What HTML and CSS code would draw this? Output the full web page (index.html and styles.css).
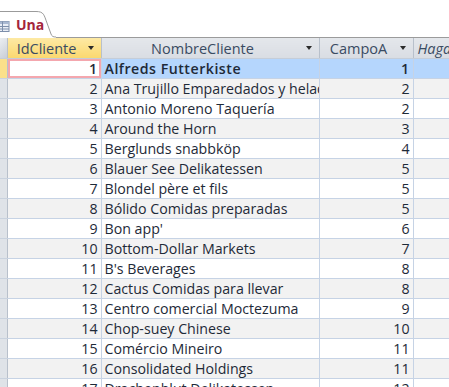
FILE: index.html
```html
<!DOCTYPE html>
<html lang="es">
<head>
    <meta charset="UTF-8">
    <title>Una</title>
    <link rel="stylesheet" href="styles.css">
</head>
<body>
    <div class="tab-strip">
        <div class="tab">
            <svg class="tab-shape" width="56" height="27" viewBox="0 0 56 27">
                <path d="M0 0.5 H36 C44 0.5 44 4 47 12 L51 23 C52 25.5 53 26 56 26" fill="#fff" stroke="#9b9b9b" stroke-width="1"/>
            </svg>
            <svg class="tab-icon" width="10" height="11" viewBox="0 0 10 11">
                <rect x="-4" y="0.5" width="13" height="10" fill="#e9eef6" stroke="#7d8fab"/>
                <rect x="-4" y="0.5" width="13" height="2.5" fill="#a9b9d2"/>
                <path d="M-4 5.5 H9 M-4 8 H9 M2.5 0.5 V10.5" stroke="#7d8fab" stroke-width="1"/>
            </svg>
            <span class="tab-title">Una</span>
        </div>
        <div class="tab-fill"></div>
    </div>

    <table class="sheet">
        <colgroup>
            <col class="c-sel">
            <col class="c-id">
            <col class="c-name">
            <col class="c-campo">
            <col class="c-new">
        </colgroup>
        <thead>
            <tr>
                <th class="sel corner"></th>
                <th class="active"><span class="hd">IdCliente</span><span class="arrow"></span></th>
                <th><span class="hd">NombreCliente</span><span class="arrow"></span></th>
                <th><span class="hd">CampoA</span><span class="arrow"></span></th>
                <th class="add">Haga clic para agregar</th>
            </tr>
        </thead>
        <tbody>
            <tr class="current">
                <td class="sel"></td><td class="num focus">1</td><td>Alfreds Futterkiste</td><td class="num">1</td><td></td>
            </tr>
            <tr><td class="sel"></td><td class="num">2</td><td>Ana Trujillo Emparedados y helados</td><td class="num">2</td><td></td></tr>
            <tr><td class="sel"></td><td class="num">3</td><td>Antonio Moreno Taquería</td><td class="num">2</td><td></td></tr>
            <tr><td class="sel"></td><td class="num">4</td><td>Around the Horn</td><td class="num">3</td><td></td></tr>
            <tr><td class="sel"></td><td class="num">5</td><td>Berglunds snabbköp</td><td class="num">4</td><td></td></tr>
            <tr><td class="sel"></td><td class="num">6</td><td>Blauer See Delikatessen</td><td class="num">5</td><td></td></tr>
            <tr><td class="sel"></td><td class="num">7</td><td>Blondel père et fils</td><td class="num">5</td><td></td></tr>
            <tr><td class="sel"></td><td class="num">8</td><td>Bólido Comidas preparadas</td><td class="num">5</td><td></td></tr>
            <tr><td class="sel"></td><td class="num">9</td><td>Bon app'</td><td class="num">6</td><td></td></tr>
            <tr><td class="sel"></td><td class="num">10</td><td>Bottom-Dollar Markets</td><td class="num">7</td><td></td></tr>
            <tr><td class="sel"></td><td class="num">11</td><td>B's Beverages</td><td class="num">8</td><td></td></tr>
            <tr><td class="sel"></td><td class="num">12</td><td>Cactus Comidas para llevar</td><td class="num">8</td><td></td></tr>
            <tr><td class="sel"></td><td class="num">13</td><td>Centro comercial Moctezuma</td><td class="num">9</td><td></td></tr>
            <tr><td class="sel"></td><td class="num">14</td><td>Chop-suey Chinese</td><td class="num">10</td><td></td></tr>
            <tr><td class="sel"></td><td class="num">15</td><td>Comércio Mineiro</td><td class="num">11</td><td></td></tr>
            <tr><td class="sel"></td><td class="num">16</td><td>Consolidated Holdings</td><td class="num">11</td><td></td></tr>
            <tr><td class="sel"></td><td class="num">17</td><td>Drachenblut Delikatessen</td><td class="num">12</td><td></td></tr>
        </tbody>
    </table>
</body>
</html>
```

FILE: styles.css
```css
body {
    margin: 0;
    background: #fff;
    font-family: "Open Sans", "Liberation Sans", sans-serif;
    font-size: 14.2px;
    color: #1e2a38;
    overflow: hidden;
    width: 449px;
    height: 387px;
}

/* pestaña del objeto */
.tab-strip {
    display: flex;
    height: 38px;
    align-items: flex-end;
}
.tab {
    position: relative;
    width: 56px;
    height: 26px;
    flex: none;
}
.tab-shape {
    position: absolute;
    left: 0;
    top: -1px;
}
.tab-icon {
    position: absolute;
    left: 0;
    top: 9px;
}
.tab-title {
    position: absolute;
    left: 16px;
    top: 3px;
    font-weight: bold;
    font-size: 14px;
    color: #a4243b;
}
.tab-fill {
    flex: 1;
    height: 1px;
    background: #9b9b9b;
}

/* hoja de datos */
.sheet {
    border-collapse: collapse;
    table-layout: fixed;
    width: 560px;
}
.c-sel { width: 7px; }
.c-id { width: 94px; }
.c-name { width: 218px; }
.c-campo { width: 94px; }
.c-new { width: 147px; }

.sheet th {
    height: 20px;
    padding: 0 15px 0 0;
    font-weight: normal;
    font-size: 14.5px;
    line-height: 19px;
    color: #3a4b62;
    background: linear-gradient(#e4e7eb, #d9dde3);
    border-right: 1px solid #b8c0cb;
    border-bottom: 1px solid #c5cdd8;
    white-space: nowrap;
    overflow: hidden;
    text-align: center;
    position: relative;
}
.sheet th.active {
    background: linear-gradient(#fde9a4, #fbd86f);
}
.sheet th.corner {
    padding: 0;
    background: linear-gradient(135deg, #eceff2, #c9ced6);
}
.sheet th.add {
    padding: 0 4px;
    text-align: left;
    font-style: italic;
    color: #3a4b62;
}
.arrow {
    position: absolute;
    right: 7px;
    top: 8px;
    width: 0;
    height: 0;
    border-left: 3.5px solid transparent;
    border-right: 3.5px solid transparent;
    border-top: 4px solid #2b2b2b;
}

.sheet td {
    height: 19px;
    padding: 0 3px;
    border-right: 1px solid #c6d3e5;
    border-bottom: 1px solid #c6d3e5;
    white-space: nowrap;
    overflow: hidden;
    line-height: 19px;
}
.sheet tbody tr:nth-child(even) td {
    background: #f2f2f2;
}
.sheet td.num {
    text-align: right;
}
.sheet td.sel {
    padding: 0;
    background: #dfe3e8;
    border-right: 1px solid #b8c0cb;
    border-bottom: 1px solid #c9d2de;
}
.sheet tbody tr:nth-child(even) td.sel {
    background: #dfe3e8;
}
.sheet tr.current td {
    background: #b5d6fd;
    font-weight: 600;
    letter-spacing: 0.5px;
}
.sheet tr.current td.sel {
    background: #fbe08a;
}
.sheet tr.current td.focus {
    background: #fff;
    box-shadow: inset 0 0 0 2px #f4a7ae;
}
```
